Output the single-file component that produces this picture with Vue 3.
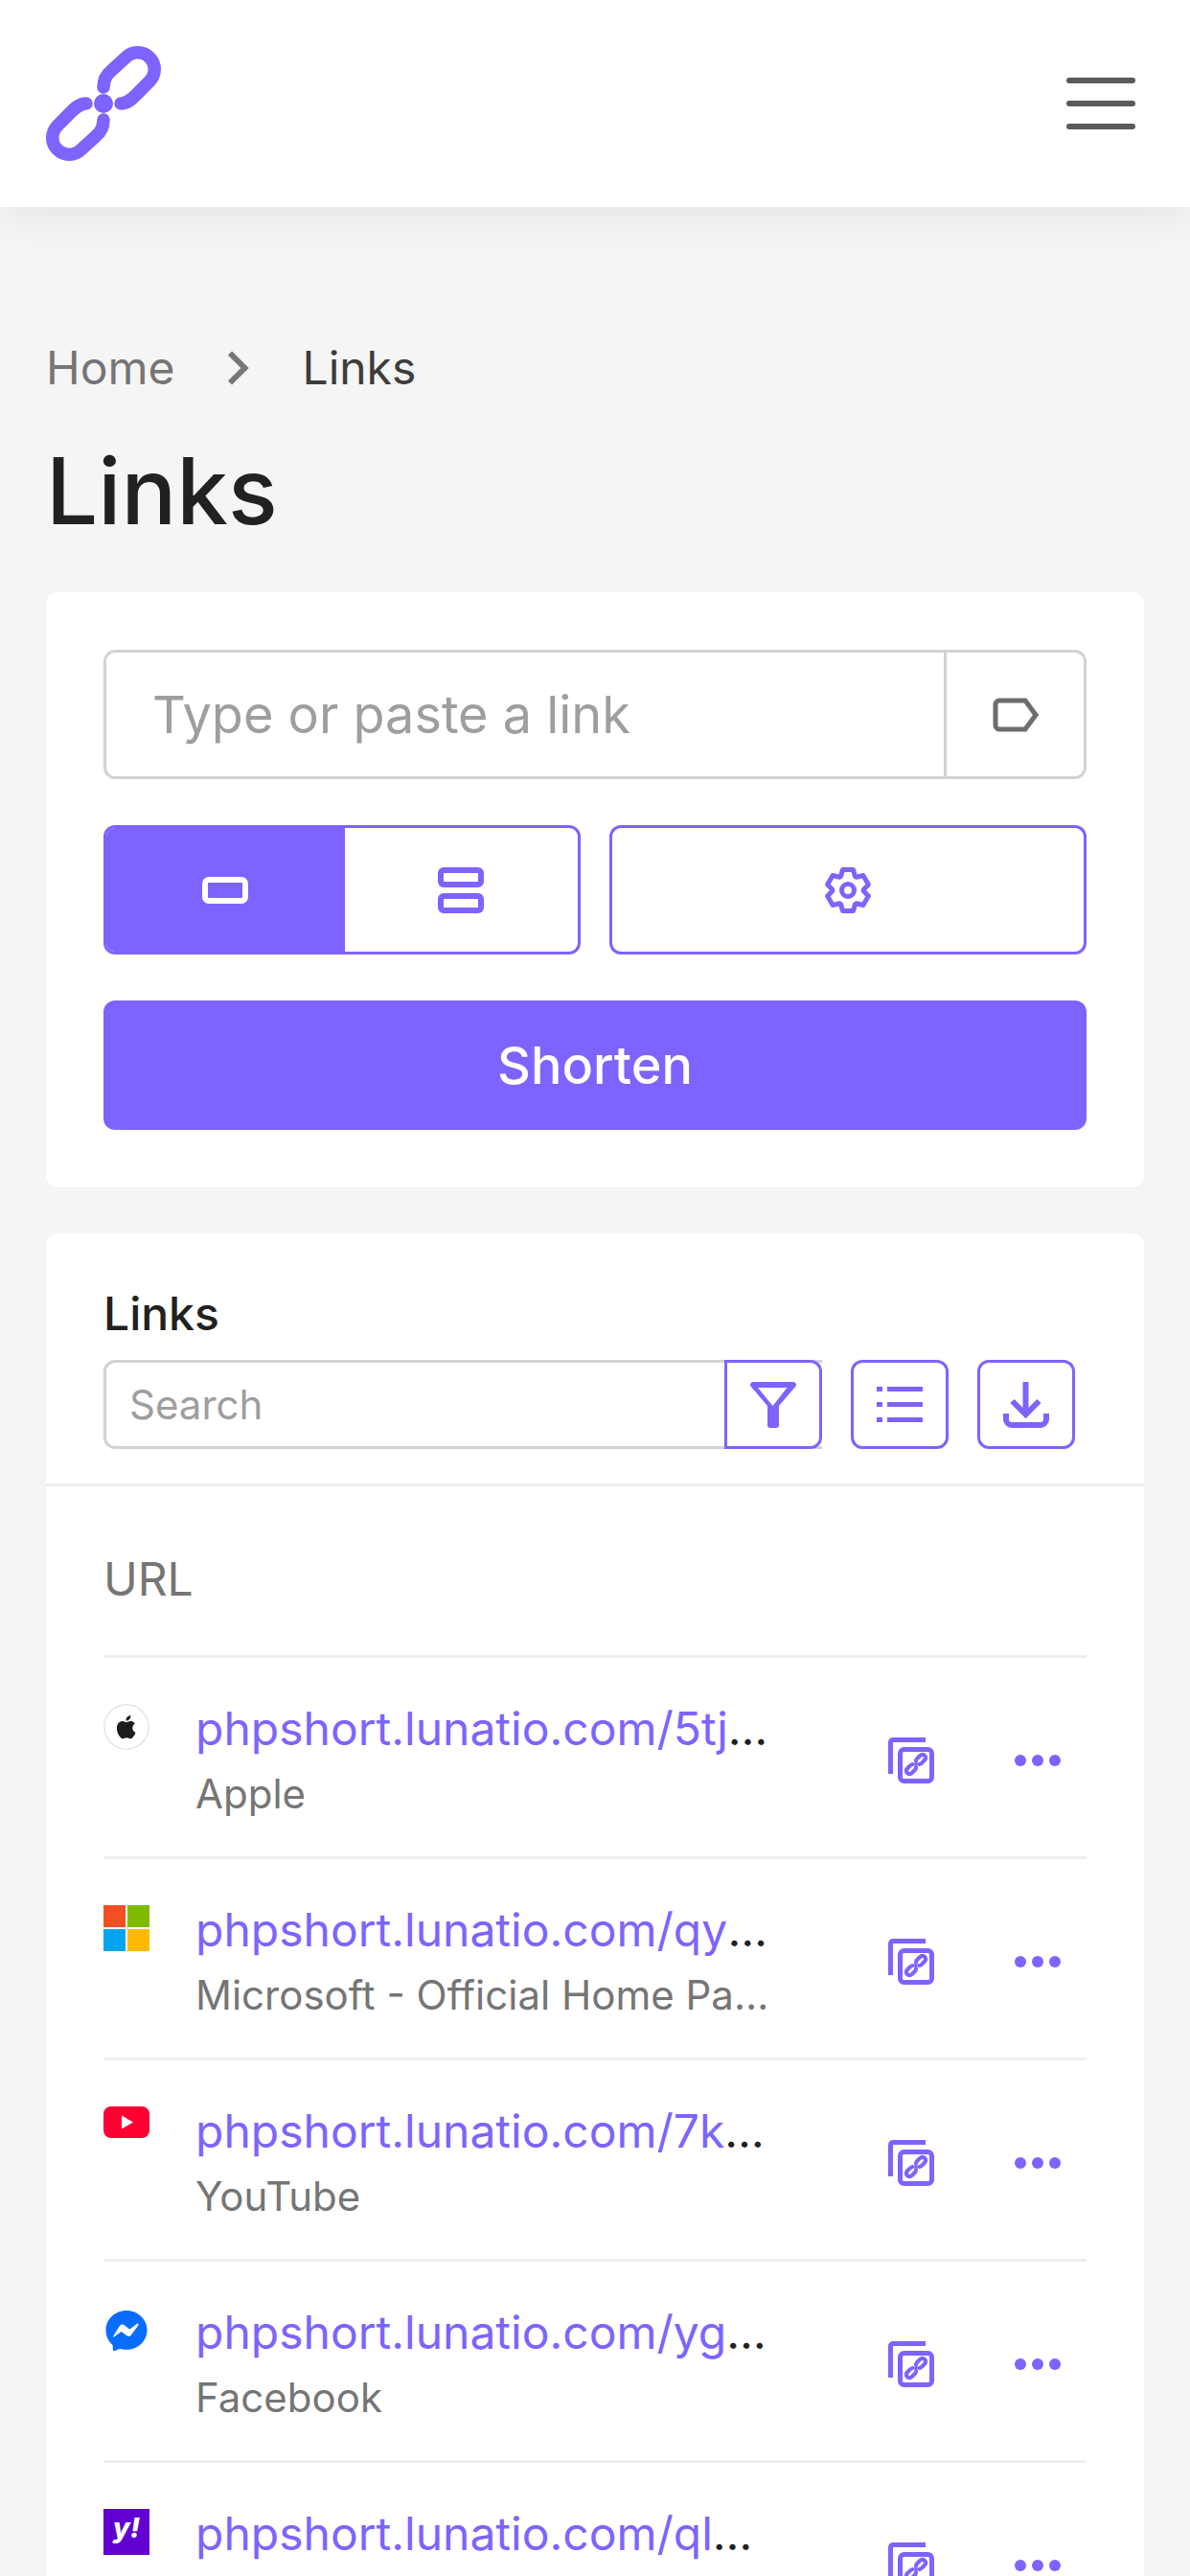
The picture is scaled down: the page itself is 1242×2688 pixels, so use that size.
<template>
  <div class="page">
    <header class="topbar">
      <svg class="logo" viewBox="0 0 120 120" fill="none" stroke="#7c64ff" stroke-width="13.500" stroke-linecap="round">
        <path :d="linkPath" />
        <path :d="linkPath" transform="rotate(180 60 60)" />
        <circle cx="60" cy="60" r="10" fill="#7c64ff" stroke="none" />
      </svg>
      <div class="burger"><i></i><i></i><i></i></div>
    </header>

    <main class="content">
      <nav class="crumbs">
        <span class="crumb-home">Home</span>
        <svg class="crumb-arrow" viewBox="0 0 24 36" fill="none" stroke="#777" stroke-width="6"><path d="M3 2.500L18.500 18L3 33.500" /></svg>
        <span class="crumb-cur">Links</span>
      </nav>
      <h1>Links</h1>

      <section class="card shorten">
        <div class="link-input">
          <span class="placeholder">Type or paste a link</span>
          <span class="tag-btn">
            <svg class="i48" viewBox="0 0 48 48" fill="none" stroke="#6e6e6e" stroke-width="5"><path d="M7 9H34L45 24L34 39H7A4 4 0 0 1 3 35V13A4 4 0 0 1 7 9Z" /></svg>
          </span>
        </div>
        <div class="mode-row">
          <div class="mode-group">
            <span class="mode active">
              <svg class="i48" viewBox="0 0 48 48" fill="none" stroke="#fff" stroke-width="6"><rect x="3" y="13" width="42" height="22" rx="4" /></svg>
            </span>
            <span class="mode">
              <svg class="i48" viewBox="0 0 48 48" fill="none" stroke="#7c64ff" stroke-width="6"><rect x="3" y="3" width="42" height="15" rx="3" /><rect x="3" y="30" width="42" height="15" rx="3" /></svg>
            </span>
          </div>
          <span class="settings">
            <svg class="i48" viewBox="0 0 48 48" fill="none" stroke="#7c64ff" stroke-width="5" stroke-linejoin="round">
              <path :d="gearPath" />
              <circle cx="24" cy="24" r="6.500" />
            </svg>
          </span>
        </div>
        <div class="shorten-btn">Shorten</div>
      </section>

      <section class="card links">
        <div class="links-head">
          <div class="links-title">Links</div>
          <div class="tools">
            <div class="search">
              <span class="search-text">Search</span>
              <span class="tool filter">
                <svg class="i48" viewBox="0 0 48 48" fill="#7c64ff">
                  <path d="M3 0H45A3 3 0 0 1 47.500 4.500L30 25V45A3 3 0 0 1 27 48H21A3 3 0 0 1 18 45V25L.5 4.500A3 3 0 0 1 3 0ZM8 6L23.500 25L38.500 6Z" fill-rule="evenodd" />
                </svg>
              </span>
            </div>
            <span class="tool">
              <svg class="i48" viewBox="0 0 48 48" fill="#7c64ff">
                <rect x="0" y="5" width="6" height="5" /><rect x="11" y="5" width="37" height="5" />
                <rect x="0" y="21" width="6" height="5" /><rect x="11" y="21" width="37" height="5" />
                <rect x="0" y="37" width="6" height="5" /><rect x="11" y="37" width="37" height="5" />
              </svg>
            </span>
            <span class="tool">
              <svg class="i48" viewBox="0 0 48 48" fill="none" stroke="#7c64ff" stroke-width="6">
                <path d="M23.500 0V32" /><path d="M9.500 20L23.500 34L37.500 20" />
                <path d="M3 33V39A6 6 0 0 0 9 45H39A6 6 0 0 0 45 39V33" />
              </svg>
            </span>
          </div>
        </div>

        <div class="table">
          <div class="url-head">URL</div>
          <div v-for="row in rows" :key="row.slug" class="row">
            <span class="fav">
              <svg v-if="row.icon === 'apple'" viewBox="0 0 48 48">
                <circle cx="24" cy="24" r="23.200" fill="#fff" stroke="#e6e6e6" stroke-width="1.500" />
                <path fill="#1d1d1f" d="M30.300 25c0-3 2.400-4.400 2.600-4.500-1.400-2.100-3.600-2.400-4.400-2.400-1.900-.2-3.600 1.100-4.600 1.100s-2.400-1.100-4-1.100c-2 0-3.900 1.200-5 3-2.100 3.700-.5 9.200 1.500 12.200 1 1.500 2.200 3.100 3.800 3 1.500-.1 2.100-1 3.900-1s2.400 1 4 1c1.700 0 2.700-1.500 3.700-3 1.200-1.700 1.600-3.300 1.700-3.400-.1-.1-3.200-1.200-3.200-4.900zM27.200 15.900c.8-1 1.400-2.400 1.200-3.900-1.200.1-2.700.8-3.600 1.800-.8.900-1.500 2.300-1.300 3.700 1.400.1 2.800-.7 3.700-1.600z" />
              </svg>
              <svg v-else-if="row.icon === 'ms'" viewBox="0 0 48 48">
                <rect width="23" height="23" fill="#f25022" /><rect x="25" width="23" height="23" fill="#7fba00" />
                <rect y="25" width="23" height="23" fill="#00a4ef" /><rect x="25" y="25" width="23" height="23" fill="#ffb900" />
              </svg>
              <svg v-else-if="row.icon === 'yt'" viewBox="0 0 48 48">
                <rect y="0" width="48" height="33" rx="8" fill="#ff0033" /><path d="M19 9.500L31 16.500L19 23.500Z" fill="#fff" />
              </svg>
              <svg v-else-if="row.icon === 'msg'" viewBox="0 0 48 48">
                <path fill="#0a6cff" d="M24 3C12.200 3 2.500 11.900 2.500 23.500c0 6.100 2.500 11.300 6.600 14.900.4.300.6.800.6 1.300l.1 3.700c0 1.200 1.200 1.900 2.300 1.500l4.100-1.800c.3-.2.700-.2 1.100-.1 2 .5 4 .8 6.700.8 11.800 0 21.500-8.900 21.500-20.300S35.800 3 24 3z" />
                <path fill="#fff" d="M10.500 29.200l6.400-10.100c1-1.600 3.200-2 4.700-.9l5 3.800c.5.300 1.100.3 1.600 0l6.800-5.200c.9-.7 2.100.4 1.500 1.400L29.100 28.300c-1 1.600-3.200 2-4.700.9l-5-3.800c-.5-.3-1.100-.3-1.600 0l-6.800 5.200c-.9.700-1.100-.4-.5-1.400z" />
              </svg>
              <svg v-else viewBox="0 0 48 48">
                <rect width="48" height="48" fill="#6001d2" />
                <text x="24" y="30" text-anchor="middle" fill="#fff" font-family="Inter, sans-serif" font-size="29" font-weight="800" font-style="italic">y!</text>
              </svg>
            </span>
            <div class="texts">
              <div class="url"><span class="url-link">phpshort.lunatio.com/{{ row.slug }}</span></div>
              <div class="title">{{ row.title }}</div>
            </div>
            <div class="actions">
              <svg class="i48" viewBox="0 0 48 48" fill="none" stroke="#7c64ff" stroke-width="5">
                <path d="M39 2.500H5A2.500 2.500 0 0 0 2.500 5V38" />
                <rect x="12.500" y="12.500" width="33" height="33" rx="4" />
                <g transform="translate(17.600 16.600) scale(.19)" stroke-width="22" stroke-linecap="round">
                  <path :d="linkPath" />
                  <path :d="linkPath" transform="rotate(180 60 60)" />
                  <circle cx="60" cy="60" r="10" fill="#7c64ff" stroke="none" />
                </g>
              </svg>
              <svg class="i48" viewBox="0 0 48 48" fill="#7c64ff"><circle cx="6" cy="24" r="6" /><circle cx="24" cy="24" r="6" /><circle cx="42" cy="24" r="6" /></svg>
            </div>
          </div>
        </div>
      </section>
    </main>
  </div>
</template>

<script setup>
const rows = [
  { icon: 'apple', slug: '5tjWq2nPc', title: 'Apple' },
  { icon: 'ms', slug: 'qyH3mLxZa', title: 'Microsoft - Official Home Page and more' },
  { icon: 'yt', slug: '7kRf9sBvT', title: 'YouTube' },
  { icon: 'msg', slug: 'ygD4tKeNu', title: 'Facebook' },
  { icon: 'yahoo', slug: 'qlM8cVjXo', title: 'Yahoo' }
]

const linkPath = 'M60 43C60 36 63 30 68 26L83.300 11.900A17.500 17.500 0 0 1 108.100 36.700L95 50C90 55 85 60 78 60'

// six teeth, pointing up and down, around the middle of a 48 box
const toothPoints = [[-7.5, -14.5], [-5.5, -21.5], [5.5, -21.5], [7.5, -14.5]]
const gearPoints = []
for (let t = 0; t < 6; t++) {
  const a = (t * Math.PI) / 3
  for (const [x, y] of toothPoints) {
    const px = 24 + x * Math.cos(a) - y * Math.sin(a)
    const py = 24 + x * Math.sin(a) + y * Math.cos(a)
    gearPoints.push(`${px.toFixed(2)} ${py.toFixed(2)}`)
  }
}
const gearPath = `M${gearPoints.join('L')}Z`
</script>

<style>
html,
body {
  background: #f5f5f5;
}
</style>

<style scoped>
.page {
  height: 2688px;
  overflow: hidden;
  background: #f5f5f5;
  color: #212121;
  font-family: Inter, "Liberation Sans", sans-serif;
}

.page * {
  box-sizing: border-box;
}

.topbar {
  display: flex;
  align-items: center;
  justify-content: space-between;
  height: 216px;
  padding: 0 57px 0 48px;
  background: #fff;
  box-shadow: 0 6px 48px rgb(0 0 0 / 8%);
}

.logo {
  width: 120px;
  height: 120px;
}

.burger {
  display: flex;
  flex-direction: column;
  gap: 18px;
  width: 72px;
}

.burger i {
  height: 6px;
  border-radius: 3px;
  background: #5a5a5a;
}

.content {
  padding: 144px 48px 0;
}

.crumbs {
  display: flex;
  align-items: center;
  height: 48px;
  font-size: 48px;
  line-height: 48px;
}

.crumb-home {
  color: #757575;
}

.crumb-arrow {
  width: 24px;
  height: 36px;
  margin: 0 54px 0 55px;
}

.crumb-cur {
  color: #3c3c3c;
}

h1 {
  margin: 44px 0 46px;
  font-size: 96px;
  font-weight: 500;
  line-height: 120px;
  color: #212121;
}

.card {
  border-radius: 12px;
  background: #fff;
  box-shadow: 0 1px 3px rgb(0 0 0 / 2%);
}

.shorten {
  display: flex;
  flex-direction: column;
  gap: 48px;
  padding: 60px;
}

.link-input {
  display: flex;
  height: 135px;
  border: 3px solid #d2d2d2;
  border-radius: 12px;
  background: #fff;
}

.placeholder {
  flex: 1;
  padding-left: 48px;
  color: #9e9e9e;
  font-size: 54px;
  line-height: 129px;
}

.tag-btn {
  display: flex;
  align-items: center;
  justify-content: center;
  width: 146px;
  border-left: 3px solid #d2d2d2;
}

.i48 {
  width: 48px;
  height: 48px;
  flex: none;
}

.mode-row {
  display: grid;
  grid-template-columns: 1fr 1fr;
  gap: 30px;
}

.mode-group {
  display: flex;
  height: 135px;
  overflow: hidden;
  border: 3px solid #7c64ff;
  border-radius: 12px;
}

.mode {
  display: flex;
  flex: 1;
  align-items: center;
  justify-content: center;
  padding-right: 2px;
}

.mode.active {
  flex: none;
  width: 249px;
  background: #7c64ff;
}

.settings {
  display: flex;
  align-items: center;
  justify-content: center;
  height: 135px;
  border: 3px solid #7c64ff;
  border-radius: 12px;
}

.shorten-btn {
  height: 135px;
  border-radius: 12px;
  background: #7c64ff;
  color: #fff;
  font-size: 54px;
  font-weight: 500;
  line-height: 135px;
  text-align: center;
}

.links {
  margin-top: 48px;
  padding-bottom: 60px;
}

.links-head {
  padding: 54px 60px 36px;
  border-bottom: 3px solid #efefef;
}

.links-title {
  height: 78px;
  font-size: 48px;
  font-weight: 450;
  line-height: 60px;
}

.tools {
  display: flex;
  gap: 30px;
  width: 1014px;
}

.search {
  display: flex;
  flex: 1;
  height: 93px;
  border: 3px solid #d2d2d2;
  border-right: 0;
  border-radius: 12px 0 0 12px;
}

.search-text {
  flex: 1;
  padding-left: 24px;
  color: #9e9e9e;
  font-size: 42px;
  line-height: 87px;
}

.tool {
  display: flex;
  align-items: center;
  justify-content: center;
  width: 102px;
  height: 93px;
  border: 3px solid #7c64ff;
  border-radius: 12px;
}

.tool.filter {
  margin: -3px 0;
  border-radius: 0 12px 12px 0;
}

.table {
  padding: 0 60px;
}

.url-head {
  height: 179px;
  padding-top: 67px;
  border-bottom: 3px solid #efefef;
  color: #757575;
  font-size: 48px;
  line-height: 60px;
}

.row {
  display: flex;
  height: 210px;
  padding-top: 38px;
  border-bottom: 3px solid #efefef;
}

.fav {
  display: block;
  width: 48px;
  height: 48px;
  flex: none;
  margin: 10px 48px 0 0;
}

.fav svg {
  display: block;
  width: 48px;
  height: 48px;
}

.texts {
  width: 600px;
  min-width: 0;
}

.url,
.title {
  overflow: hidden;
  text-overflow: ellipsis;
  white-space: nowrap;
}

.url {
  color: #212121;
  font-size: 48px;
  line-height: 72px;
}

.url-link {
  color: #7c64ff;
}

.title {
  color: #757575;
  font-size: 42px;
  line-height: 63px;
}

.actions {
  display: flex;
  flex: 1;
  align-items: center;
  justify-content: space-between;
  height: 114px;
  margin-top: 12px;
  padding-left: 123px;
  padding-right: 27px;
}
</style>
